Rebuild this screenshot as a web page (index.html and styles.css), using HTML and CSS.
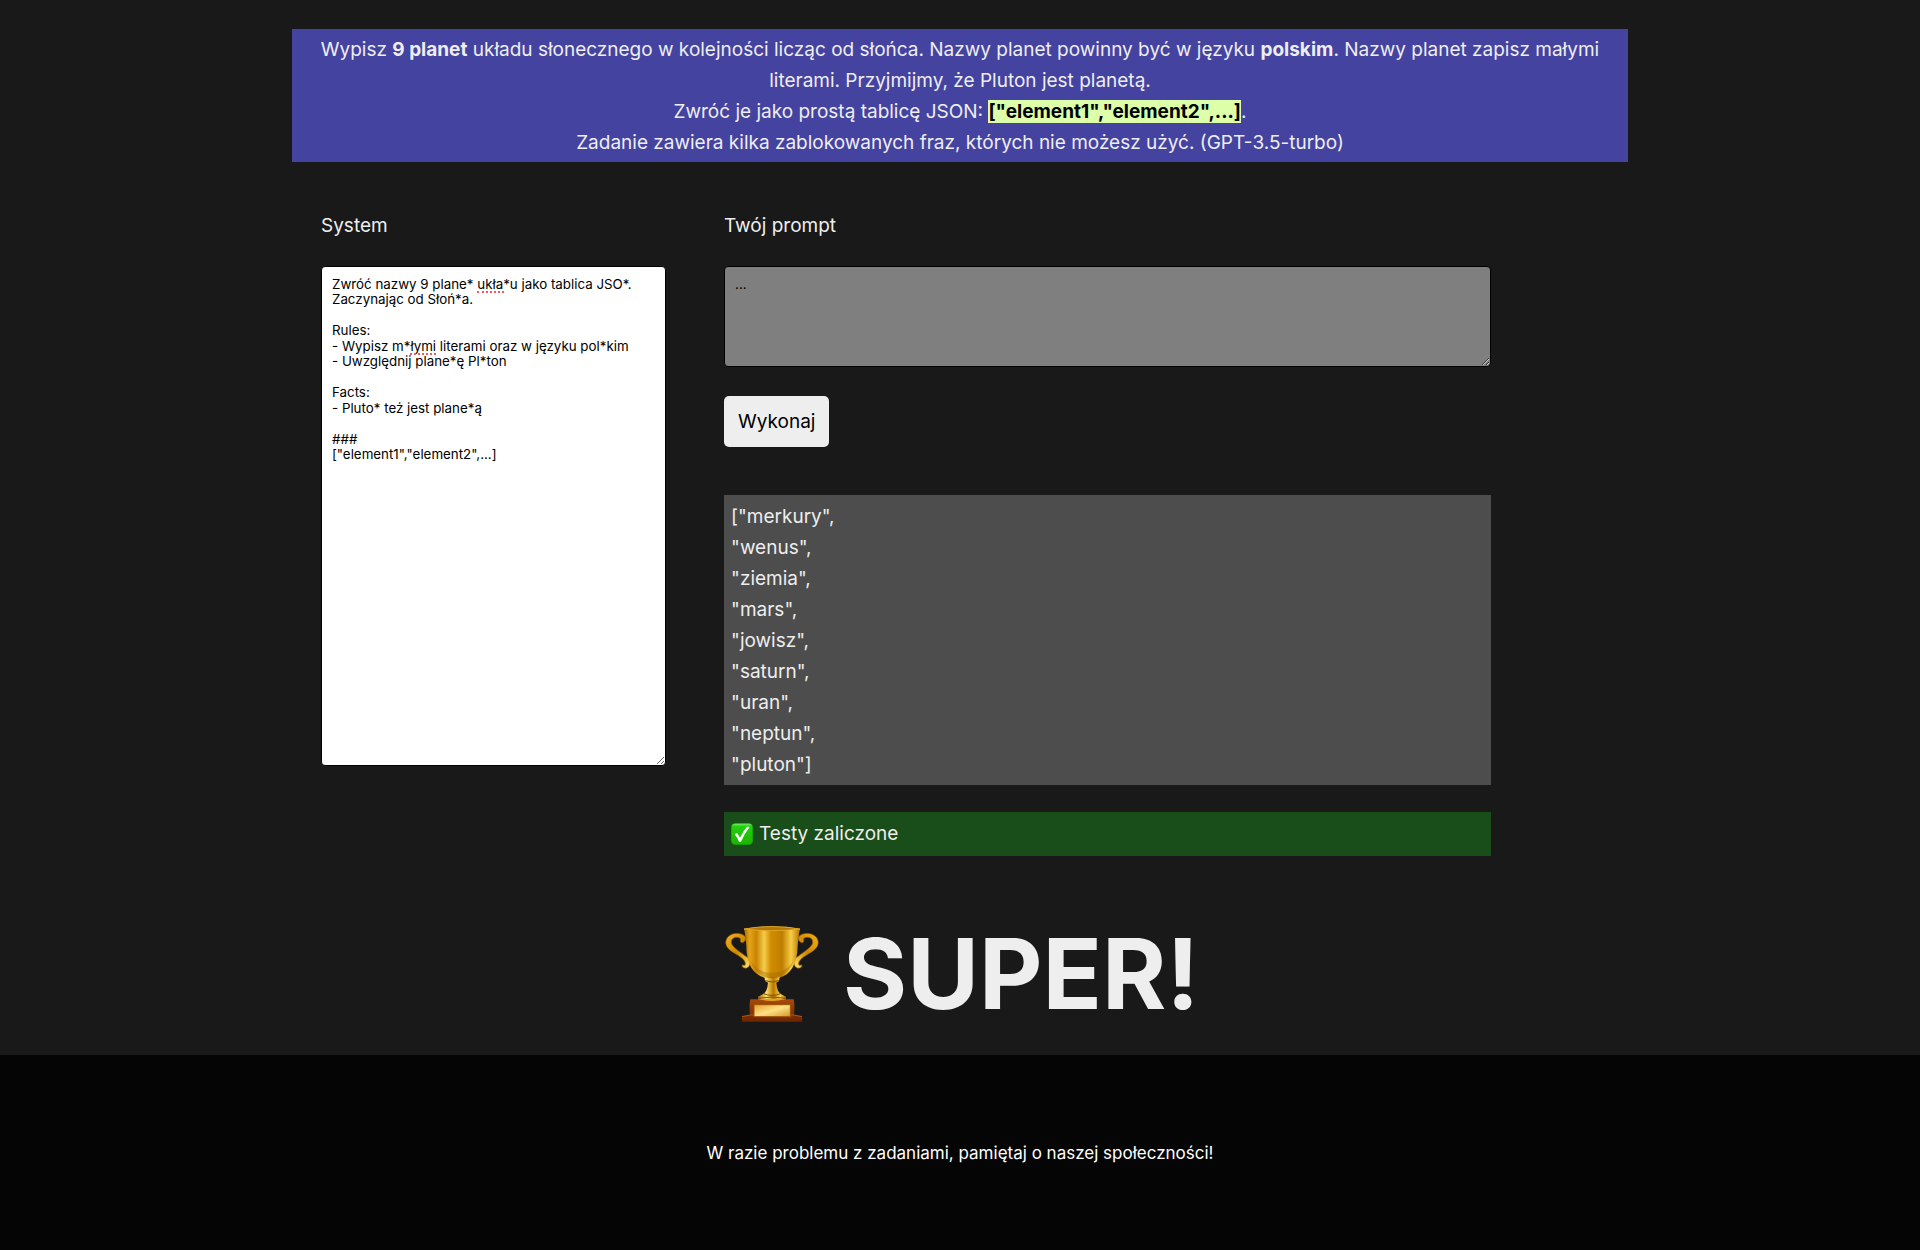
FILE: index.html
```html
<!DOCTYPE html>
<html lang="pl">
<head>
<meta charset="utf-8">
<meta name="viewport" content="width=device-width, initial-scale=1">
<title>Planety</title>
<link rel="stylesheet" href="styles.css">
</head>
<body>
<main class="page">
  <p class="task">Wypisz <strong>9 planet</strong> układu słonecznego w kolejności licząc od słońca. Nazwy planet powinny być w języku <strong>polskim</strong>. Nazwy planet zapisz małymi literami. Przyjmijmy, że Pluton jest planetą.<br>
  Zwróć je jako prostą tablicę JSON: <strong class="sample">["element1","element2",...]</strong>.<br>
  Zadanie zawiera kilka zablokowanych fraz, których nie możesz użyć. (GPT-3.5-turbo)</p>

  <div class="columns">
    <section class="column">
      <label class="label" for="system">System</label>
      <div class="editor">
        <textarea class="field field-system" id="system" spellcheck="false">Zwróć nazwy 9 plane* ukła*u jako tablica JSO*.
Zaczynając od Słoń*a.

Rules:
- Wypisz m*łymi literami oraz w języku pol*kim
- Uwzględnij plane*ę Pl*ton

Facts:
- Pluto* też jest plane*ą

###
["element1","element2",...]</textarea>
        <span class="typo typo-first"></span>
        <span class="typo typo-second"></span>
      </div>
    </section>

    <section class="column">
      <label class="label" for="prompt">Twój prompt</label>
      <textarea class="field field-prompt" id="prompt">...</textarea>
      <button class="run" type="button">Wykonaj</button>
      <output class="result">["merkury",
"wenus",
"ziemia",
"mars",
"jowisz",
"saturn",
"uran",
"neptun",
"pluton"]</output>
      <p class="status">
        <svg class="check" viewBox="0 0 66 66" aria-hidden="true">
          <defs>
            <linearGradient id="green" x1="0" y1="0" x2="0" y2="1">
              <stop offset="0" stop-color="#7be86f"/>
              <stop offset=".14" stop-color="#22d00e"/>
              <stop offset="1" stop-color="#1fb400"/>
            </linearGradient>
          </defs>
          <rect width="66" height="66" rx="13" fill="#159a10"/>
          <rect x="2" y="2" width="62" height="61" rx="11" fill="url(#green)"/>
          <path d="M11 34 L18 30 Q23 37 27 44 Q35 26 48 11 L56 12 Q40 32 30 56 H24 Q19 43 11 34Z" fill="#fff"/>
        </svg>
        Testy zaliczone
      </p>
      <h1 class="praise">
        <svg class="trophy" viewBox="44 42 291 300" aria-hidden="true">
          <defs>
            <linearGradient id="cup" x1="0" x2="1">
              <stop offset="0" stop-color="#a96800"/>
              <stop offset=".1" stop-color="#e5a41a"/>
              <stop offset=".22" stop-color="#c98300"/>
              <stop offset=".36" stop-color="#f5cd4c"/>
              <stop offset=".48" stop-color="#d08c00"/>
              <stop offset=".68" stop-color="#c07e00"/>
              <stop offset=".84" stop-color="#f7cd45"/>
              <stop offset="1" stop-color="#b87400"/>
            </linearGradient>
            <linearGradient id="stem" x1="0" x2="1">
              <stop offset="0" stop-color="#9c5d00"/>
              <stop offset=".3" stop-color="#ffe067"/>
              <stop offset=".55" stop-color="#b87700"/>
              <stop offset=".8" stop-color="#ffd34a"/>
              <stop offset="1" stop-color="#9c5d00"/>
            </linearGradient>
            <linearGradient id="handle" x1="0" y1="0" x2="1" y2="1">
              <stop offset="0" stop-color="#f1b321"/>
              <stop offset=".5" stop-color="#cf8900"/>
              <stop offset="1" stop-color="#ffe26a"/>
            </linearGradient>
            <linearGradient id="plate" x1="0" y1="0" x2="1" y2="1">
              <stop offset="0" stop-color="#e0a22e"/>
              <stop offset=".5" stop-color="#ffe084"/>
              <stop offset="1" stop-color="#d3952b"/>
            </linearGradient>
            <linearGradient id="wood" x1="0" y1="0" x2="0" y2="1">
              <stop offset="0" stop-color="#a84a0c"/>
              <stop offset="1" stop-color="#6d2400"/>
            </linearGradient>
          </defs>
          <path id="arm" d="M108 80 C94 65 65 68 54 83 C43 100 52 116 73 128 C94 140 109 150 108 163 C106 169 103 164 99 165 C96 171 104 176 112 174 C125 170 125 151 114 142 C96 128 68 112 66 98 C65 82 83 78 94 86 C91 93 94 101 102 97 C108 93 110 87 108 80Z" fill="url(#handle)" stroke="#9c5e00" stroke-width="2"/>
          <use href="#arm" transform="translate(376 0) scale(-1 1)"/>
          <path d="M104 56 Q188 42 272 56 Q267 77 265 108 C264 163 243 195 210 203 H166 C133 195 111 163 111 108 Q109 77 104 56Z" fill="url(#cup)"/>
          <path d="M104 57 Q188 42 272 57 Q188 67 104 57Z" fill="#b57808" stroke="#efb52d" stroke-width="2"/>
          <path d="M121 151 Q138 188 166 201 Q188 208 210 201 Q240 188 254 151 Q234 181 206 187 Q188 190 170 187 Q141 181 121 151Z" fill="#9b6200" opacity=".35"/>
          <path d="M165 200 Q188 208 211 200 L209 213 L201 218 Q203 243 213 251 L230 260 V272 H146 V260 L163 251 Q174 243 176 218 L167 213Z" fill="url(#stem)"/>
          <path d="M167 212 Q188 220 209 212 M162 251 Q188 261 214 251 M147 265 Q188 257 229 265" fill="none" stroke="#855000" stroke-width="3"/>
          <path d="M123 268 H253 Q257 280 254 315 L277 320 Q281 328 277 335 H99 Q95 327 99 320 L122 315 Q119 280 123 268Z" fill="url(#wood)"/>
          <path d="M98 320 L122 315 H254 L278 320" fill="none" stroke="#b7540f" stroke-width="3"/>
          <path d="M147 267 Q188 279 229 267" fill="#dfa41c"/>
          <rect x="134" y="284" width="109" height="36" fill="url(#plate)" stroke="#9b5207" stroke-width="3"/>
        </svg>
        SUPER!
      </h1>
    </section>
  </div>
</main>
<footer class="footer">W razie problemu z zadaniami, pamiętaj o naszej społeczności!</footer>
</body>
</html>
```
FILE: styles.css
```css
* {
  box-sizing: border-box;
}

body {
  display: flex;
  flex-direction: column;
  min-height: 100vh;
  margin: 0;
  background: #191919;
  color: #eee;
  font: 19px/31px Inter, "Liberation Sans", sans-serif;
}

.page {
  width: 100%;
  max-width: 1336px;
  margin: 0 auto;
  padding-top: 29px;
}

.task {
  margin: 0;
  padding: 5px 19px 4px;
  background: #4543a0;
  text-align: center;
}

.sample {
  background: #dfa;
  color: #000;
}

.columns {
  display: grid;
  grid-template-columns: 27% 60%;
  column-gap: 58px;
  padding: 48px 29px 21px;
}

.column {
  display: flex;
  flex-direction: column;
  align-items: stretch;
}

.label {
  margin-bottom: 25px;
}

.editor {
  position: relative;
  display: flex;
}

.field {
  width: 100%;
  margin: 0;
  padding: 10px;
  border: 1px solid #000;
  border-radius: 4px;
  color: #000;
  font-family: Inter, "Liberation Sans", sans-serif;
  line-height: 1.16;
}

.field-system {
  height: 500px;
  background: #fff;
}

.field-prompt {
  height: 101px;
  background: #7f7f7f;
}

/* Spelling marks under the words in the system text */
.typo {
  position: absolute;
  border-bottom: 2px dotted #f05a5a;
  pointer-events: none;
}

.typo-first {
  top: 25px;
  left: 156px;
  width: 27px;
}

.typo-second {
  top: 87px;
  left: 89px;
  width: 26px;
}

.run {
  align-self: flex-start;
  margin: 29px 0 48px;
  padding: 10px 14px;
  border: 0;
  border-radius: 5px;
  background: #eee;
  color: #000;
  font: inherit;
}

.result {
  padding: 6px 7px 5px;
  background: #4d4d4d;
  white-space: pre-line;
}

.status {
  display: flex;
  align-items: center;
  gap: 6px;
  margin: 27px 0 0;
  padding: 6px 7px 7px;
  background: #194d19;
}

.check {
  width: 22px;
  height: 22px;
}

.praise {
  display: flex;
  align-items: center;
  gap: 22px;
  margin: 58px 0 0;
  font-size: 98px;
  line-height: 120px;
}

.trophy {
  width: 97px;
  height: 100px;
}

.footer {
  flex: 1;
  padding: 85px 20px 84px;
  background: #050505;
  color: #fff;
  font-size: 17px;
  line-height: 26px;
  text-align: center;
}
```
